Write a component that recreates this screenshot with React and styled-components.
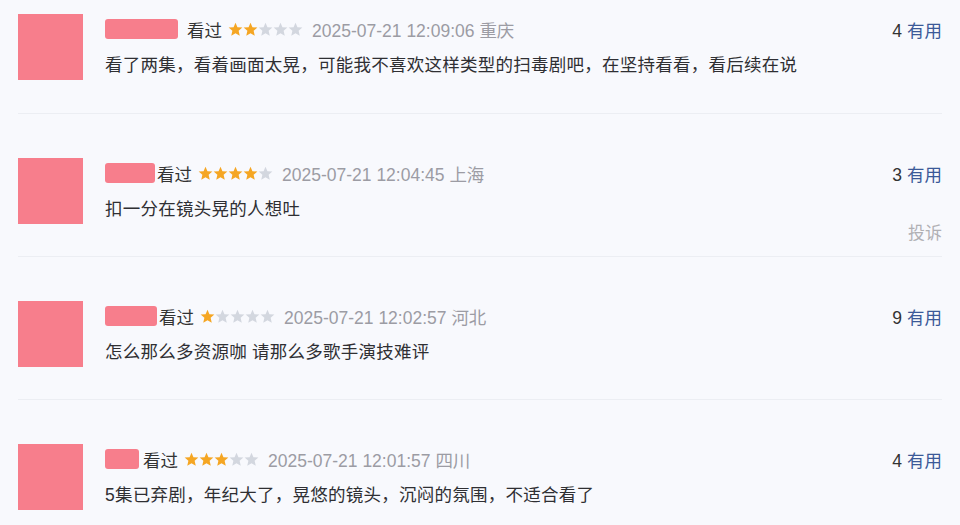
import React from 'react';
import styled, { createGlobalStyle } from 'styled-components';

const reviews = [
  { nameWidth: 73, nameGap: 9, stars: 2, time: '2025-07-21 12:09:06', place: '重庆', useful: 4, text: '看了两集，看着画面太晃，可能我不喜欢这样类型的扫毒剧吧，在坚持看看，看后续在说' },
  { nameWidth: 50, nameGap: 2, stars: 4, time: '2025-07-21 12:04:45', place: '上海', useful: 3, text: '扣一分在镜头晃的人想吐', report: true },
  { nameWidth: 52, nameGap: 2, stars: 1, time: '2025-07-21 12:02:57', place: '河北', useful: 9, text: '怎么那么多资源咖 请那么多歌手演技难评' },
  { nameWidth: 34, nameGap: 4, stars: 3, time: '2025-07-21 12:01:57', place: '四川', useful: 4, text: '5集已弃剧，年纪大了，晃悠的镜头，沉闷的氛围，不适合看了' },
];

const GlobalStyle = createGlobalStyle`
  html, body {
    margin: 0;
    padding: 0;
    background: #f8f9fd;
  }
  body {
    font-family: "Liberation Sans", "Noto Sans CJK SC", sans-serif;
    color: #333;
  }
`;

const Page = styled.div`
  width: 960px;
  height: 525px;
  overflow: hidden;
  background: #f8f9fd;
  padding: 0 18px;
  box-sizing: border-box;
`;

const Item = styled.div`
  display: flex;
  gap: 22px;
  height: 143px;
  padding-top: 44px;
  box-sizing: border-box;
  border-bottom: 1px solid #eceef3;

  &:first-child {
    height: 114px;
    padding-top: 14px;
  }
`;

const Avatar = styled.div`
  width: 65px;
  height: 66px;
  flex-shrink: 0;
  background: #f77e8c;
`;

const Body = styled.div`
  flex: 1;
  display: flex;
  flex-direction: column;
`;

const Header = styled.div`
  display: flex;
  align-items: center;
  height: 24px;
  margin-top: 3px;
  font-size: 17.5px;
`;

const Name = styled.span`
  width: ${p => p.$w}px;
  height: 20px;
  margin-right: ${p => p.$gap}px;
  border-radius: 3px;
  background: #f77e8c;
`;

const Seen = styled.span`
  color: #333;
`;

const Stars = styled.span`
  display: inline-flex;
  margin: 0 9px 0 6px;
  svg {
    width: 15px;
    height: 15px;
    display: block;
  }
`;

const Meta = styled.span`
  color: #9c9ca4;
`;

const Useful = styled.span`
  margin-left: auto;
  color: #333;
  b {
    font-weight: normal;
    color: #3b5998;
    margin-left: 5px;
  }
`;

const Comment = styled.div`
  margin-top: 12px;
  font-size: 17.5px;
  line-height: 24px;
  letter-spacing: 0.25px;
  color: #2f2f33;
`;

const Report = styled.div`
  margin-top: 1px;
  align-self: flex-end;
  font-size: 17px;
  line-height: 24px;
  color: #b0b0b4;
`;

const Star = ({ on }) => (
  <svg viewBox="0 0 24 24">
    <polygon
      points="12,1 15.1,8.2 23,8.9 17,14.1 18.8,22 12,17.9 5.2,22 7,14.1 1,8.9 8.9,8.2"
      fill={on ? '#f5a623' : '#d3d7df'}
    />
  </svg>
);

const Review = ({ r }) => (
  <Item>
    <Avatar />
    <Body>
      <Header>
        <Name $w={r.nameWidth} $gap={r.nameGap} />
        <Seen>看过</Seen>
        <Stars>
          {[0, 1, 2, 3, 4].map(i => (
            <Star key={i} on={i < r.stars} />
          ))}
        </Stars>
        <Meta>
          {r.time} {r.place}
        </Meta>
        <Useful>
          {r.useful}
          <b>有用</b>
        </Useful>
      </Header>
      <Comment>{r.text}</Comment>
      {r.report && <Report>投诉</Report>}
    </Body>
  </Item>
);

export default function App() {
  return (
    <>
      <GlobalStyle />
      <Page>
        {reviews.map((r, i) => (
          <Review key={i} r={r} />
        ))}
      </Page>
    </>
  );
}
